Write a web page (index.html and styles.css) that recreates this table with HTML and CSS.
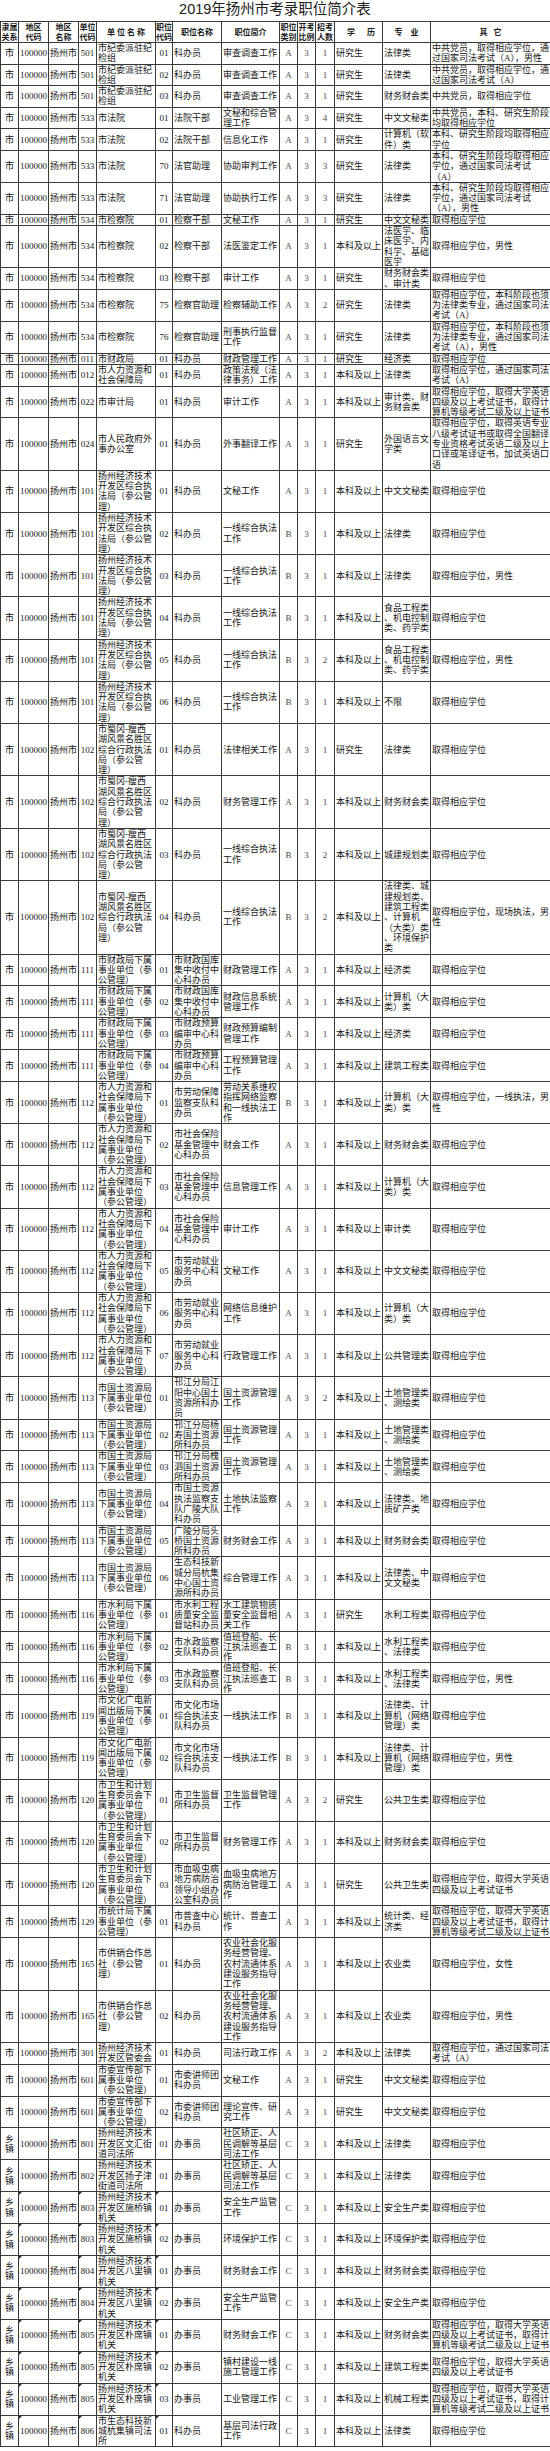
FILE: index.html
```html
<!DOCTYPE html>
<html lang="zh-CN">
<head>
<meta charset="utf-8">
<title>2019年扬州市考录职位简介表</title>
<link rel="stylesheet" href="styles.css">
</head>
<body>
<div class="title">2019年扬州市考录职位简介表</div>
<table class="jobs">
<colgroup>
<col class="w1"><col class="w2"><col class="w3"><col class="w4"><col class="w5"><col class="w6"><col class="w7"><col class="w8"><col class="w9"><col class="w10"><col class="w11"><col class="w12"><col class="w13"><col class="w14">
</colgroup>
<thead>
<tr><th>隶属<br>关系</th><th>地区<br>代码</th><th>地区<br>名称</th><th>单位<br>代码</th><th class="sp-a">单位名称</th><th>职位<br>代码</th><th>职位名称</th><th>职位简介</th><th>职位<br>类别</th><th>开考<br>比例</th><th>招考<br>人数</th><th class="sp-b">学历</th><th class="sp-c">专业</th><th class="sp-d">其它</th></tr>
</thead>
<tbody>
<tr><td>市</td><td>100000</td><td>扬州市</td><td>501</td><td>市纪委派驻纪<br>检组</td><td>01</td><td>科办员</td><td>审查调查工作</td><td>A</td><td>3</td><td>1</td><td>研究生</td><td>法律类</td><td>中共党员，取得相应学位，通<br>过国家司法考试（A），男性</td></tr>
<tr><td>市</td><td>100000</td><td>扬州市</td><td>501</td><td>市纪委派驻纪<br>检组</td><td>02</td><td>科办员</td><td>审查调查工作</td><td>A</td><td>3</td><td>1</td><td>研究生</td><td>法律类</td><td>中共党员，取得相应学位，通<br>过国家司法考试（A）</td></tr>
<tr><td>市</td><td>100000</td><td>扬州市</td><td>501</td><td>市纪委派驻纪<br>检组</td><td>03</td><td>科办员</td><td>审查调查工作</td><td>A</td><td>3</td><td>1</td><td>研究生</td><td>财务财会类</td><td>中共党员，取得相应学位</td></tr>
<tr><td>市</td><td>100000</td><td>扬州市</td><td>533</td><td>市法院</td><td>01</td><td>法院干部</td><td>文秘和综合管<br>理工作</td><td>A</td><td>3</td><td>4</td><td>研究生</td><td>中文文秘类</td><td>中共党员，本科、研究生阶段<br>均取得相应学位</td></tr>
<tr><td>市</td><td>100000</td><td>扬州市</td><td>533</td><td>市法院</td><td>02</td><td>法院干部</td><td>信息化工作</td><td>A</td><td>3</td><td>1</td><td>研究生</td><td>计算机（软<br>件）类</td><td>本科、研究生阶段均取得相应<br>学位</td></tr>
<tr><td>市</td><td>100000</td><td>扬州市</td><td>533</td><td>市法院</td><td>70</td><td>法官助理</td><td>协助审判工作</td><td>A</td><td>3</td><td>3</td><td>研究生</td><td>法律类</td><td>本科、研究生阶段均取得相应<br>学位，通过国家司法考试<br>（A）</td></tr>
<tr><td>市</td><td>100000</td><td>扬州市</td><td>533</td><td>市法院</td><td>71</td><td>法官助理</td><td>协助执行工作</td><td>A</td><td>3</td><td>3</td><td>研究生</td><td>法律类</td><td>本科、研究生阶段均取得相应<br>学位，通过国家司法考试<br>（A），男性</td></tr>
<tr><td>市</td><td>100000</td><td>扬州市</td><td>534</td><td>市检察院</td><td>01</td><td>检察干部</td><td>文秘工作</td><td>A</td><td>3</td><td>1</td><td>研究生</td><td>中文文秘类</td><td>取得相应学位</td></tr>
<tr><td>市</td><td>100000</td><td>扬州市</td><td>534</td><td>市检察院</td><td>02</td><td>检察干部</td><td>法医鉴定工作</td><td>A</td><td>3</td><td>1</td><td>本科及以上</td><td>法医学、临<br>床医学、内<br>科学、基础<br>医学</td><td>取得相应学位，男性</td></tr>
<tr><td>市</td><td>100000</td><td>扬州市</td><td>534</td><td>市检察院</td><td>03</td><td>检察干部</td><td>审计工作</td><td>A</td><td>3</td><td>1</td><td>研究生</td><td>财务财会类<br>、审计类</td><td>取得相应学位</td></tr>
<tr><td>市</td><td>100000</td><td>扬州市</td><td>534</td><td>市检察院</td><td>75</td><td>检察官助理</td><td>检察辅助工作</td><td>A</td><td>3</td><td>2</td><td>研究生</td><td>法律类</td><td>取得相应学位，本科阶段也须<br>为法律类专业，通过国家司法<br>考试（A）</td></tr>
<tr><td>市</td><td>100000</td><td>扬州市</td><td>534</td><td>市检察院</td><td>76</td><td>检察官助理</td><td>刑事执行监督<br>工作</td><td>A</td><td>3</td><td>1</td><td>研究生</td><td>法律类</td><td>取得相应学位，本科阶段也须<br>为法律类专业，通过国家司法<br>考试（A），男性</td></tr>
<tr><td>市</td><td>100000</td><td>扬州市</td><td>011</td><td>市财政局</td><td>01</td><td>科办员</td><td>财政管理工作</td><td>A</td><td>3</td><td>1</td><td>研究生</td><td>经济类</td><td>取得相应学位</td></tr>
<tr><td>市</td><td>100000</td><td>扬州市</td><td>012</td><td>市人力资源和<br>社会保障局</td><td>01</td><td>科办员</td><td>政策法规（法<br>律事务）工作</td><td>A</td><td>3</td><td>1</td><td>本科及以上</td><td>法律类</td><td>取得相应学位，通过国家司法<br>考试（A）</td></tr>
<tr><td>市</td><td>100000</td><td>扬州市</td><td>022</td><td>市审计局</td><td>01</td><td>科办员</td><td>审计工作</td><td>A</td><td>3</td><td>1</td><td>本科及以上</td><td>审计类、财<br>务财会类</td><td>取得相应学位，取得大学英语<br>四级及以上考试证书，取得计<br>算机等级考试二级及以上证书</td></tr>
<tr><td>市</td><td>100000</td><td>扬州市</td><td>024</td><td>市人民政府外<br>事办公室</td><td>01</td><td>科办员</td><td>外事翻译工作</td><td>A</td><td>3</td><td>1</td><td>研究生</td><td>外国语言文<br>学类</td><td>取得相应学位，取得英语专业<br>八级考试证书或取得全国翻译<br>专业资格考试英语二级及以上<br>口译或笔译证书，加试英语口<br>语</td></tr>
<tr><td>市</td><td>100000</td><td>扬州市</td><td>101</td><td>扬州经济技术<br>开发区综合执<br>法局（参公管<br>理）</td><td>01</td><td>科办员</td><td>文秘工作</td><td>A</td><td>3</td><td>1</td><td>本科及以上</td><td>中文文秘类</td><td>取得相应学位</td></tr>
<tr><td>市</td><td>100000</td><td>扬州市</td><td>101</td><td>扬州经济技术<br>开发区综合执<br>法局（参公管<br>理）</td><td>02</td><td>科办员</td><td>一线综合执法<br>工作</td><td>B</td><td>3</td><td>1</td><td>本科及以上</td><td>法律类</td><td>取得相应学位</td></tr>
<tr><td>市</td><td>100000</td><td>扬州市</td><td>101</td><td>扬州经济技术<br>开发区综合执<br>法局（参公管<br>理）</td><td>03</td><td>科办员</td><td>一线综合执法<br>工作</td><td>B</td><td>3</td><td>1</td><td>本科及以上</td><td>法律类</td><td>取得相应学位，男性</td></tr>
<tr><td>市</td><td>100000</td><td>扬州市</td><td>101</td><td>扬州经济技术<br>开发区综合执<br>法局（参公管<br>理）</td><td>04</td><td>科办员</td><td>一线综合执法<br>工作</td><td>B</td><td>3</td><td>1</td><td>本科及以上</td><td>食品工程类<br>、机电控制<br>类、药学类</td><td>取得相应学位</td></tr>
<tr><td>市</td><td>100000</td><td>扬州市</td><td>101</td><td>扬州经济技术<br>开发区综合执<br>法局（参公管<br>理）</td><td>05</td><td>科办员</td><td>一线综合执法<br>工作</td><td>B</td><td>3</td><td>2</td><td>本科及以上</td><td>食品工程类<br>、机电控制<br>类、药学类</td><td>取得相应学位，男性</td></tr>
<tr><td>市</td><td>100000</td><td>扬州市</td><td>101</td><td>扬州经济技术<br>开发区综合执<br>法局（参公管<br>理）</td><td>06</td><td>科办员</td><td>一线综合执法<br>工作</td><td>B</td><td>3</td><td>1</td><td>本科及以上</td><td>不限</td><td>取得相应学位</td></tr>
<tr><td>市</td><td>100000</td><td>扬州市</td><td>102</td><td>市蜀冈-瘦西<br>湖风景名胜区<br>综合行政执法<br>局（参公管<br>理）</td><td>01</td><td>科办员</td><td>法律相关工作</td><td>A</td><td>3</td><td>1</td><td>研究生</td><td>法律类</td><td>取得相应学位</td></tr>
<tr><td>市</td><td>100000</td><td>扬州市</td><td>102</td><td>市蜀冈-瘦西<br>湖风景名胜区<br>综合行政执法<br>局（参公管<br>理）</td><td>02</td><td>科办员</td><td>财务管理工作</td><td>A</td><td>3</td><td>1</td><td>本科及以上</td><td>财务财会类</td><td>取得相应学位</td></tr>
<tr><td>市</td><td>100000</td><td>扬州市</td><td>102</td><td>市蜀冈-瘦西<br>湖风景名胜区<br>综合行政执法<br>局（参公管<br>理）</td><td>03</td><td>科办员</td><td>一线综合执法<br>工作</td><td>B</td><td>3</td><td>2</td><td>本科及以上</td><td>城建规划类</td><td>取得相应学位</td></tr>
<tr><td>市</td><td>100000</td><td>扬州市</td><td>102</td><td>市蜀冈-瘦西<br>湖风景名胜区<br>综合行政执法<br>局（参公管<br>理）</td><td>04</td><td>科办员</td><td>一线综合执法<br>工作</td><td>B</td><td>3</td><td>2</td><td>本科及以上</td><td>法律类、城<br>建规划类、<br>建筑工程类<br>、计算机<br>（大类）类<br>、环境保护<br>类</td><td>取得相应学位，现场执法，男<br>性</td></tr>
<tr><td>市</td><td>100000</td><td>扬州市</td><td>111</td><td>市财政局下属<br>事业单位（参<br>公管理）</td><td>01</td><td>市财政国库<br>集中收付中<br>心科办员</td><td>财政管理工作</td><td>A</td><td>3</td><td>1</td><td>本科及以上</td><td>经济类</td><td>取得相应学位</td></tr>
<tr><td>市</td><td>100000</td><td>扬州市</td><td>111</td><td>市财政局下属<br>事业单位（参<br>公管理）</td><td>02</td><td>市财政国库<br>集中收付中<br>心科办员</td><td>财政信息系统<br>管理工作</td><td>A</td><td>3</td><td>1</td><td>本科及以上</td><td>计算机（大<br>类）类</td><td>取得相应学位</td></tr>
<tr><td>市</td><td>100000</td><td>扬州市</td><td>111</td><td>市财政局下属<br>事业单位（参<br>公管理）</td><td>03</td><td>市财政预算<br>编审中心科<br>办员</td><td>财政预算编制<br>管理工作</td><td>A</td><td>3</td><td>1</td><td>本科及以上</td><td>经济类</td><td>取得相应学位</td></tr>
<tr><td>市</td><td>100000</td><td>扬州市</td><td>111</td><td>市财政局下属<br>事业单位（参<br>公管理）</td><td>04</td><td>市财政预算<br>编审中心科<br>办员</td><td>工程预算管理<br>工作</td><td>A</td><td>3</td><td>1</td><td>本科及以上</td><td>建筑工程类</td><td>取得相应学位</td></tr>
<tr><td>市</td><td>100000</td><td>扬州市</td><td>112</td><td>市人力资源和<br>社会保障局下<br>属事业单位<br>（参公管理）</td><td>01</td><td>市劳动保障<br>监察支队科<br>办员</td><td>劳动关系维权<br>指挥网络监察<br>和一线执法工<br>作</td><td>B</td><td>3</td><td>1</td><td>本科及以上</td><td>计算机（大<br>类）类</td><td>取得相应学位，一线执法，男<br>性</td></tr>
<tr><td>市</td><td>100000</td><td>扬州市</td><td>112</td><td>市人力资源和<br>社会保障局下<br>属事业单位<br>（参公管理）</td><td>02</td><td>市社会保险<br>基金管理中<br>心科办员</td><td>财会工作</td><td>A</td><td>3</td><td>1</td><td>本科及以上</td><td>财务财会类</td><td>取得相应学位</td></tr>
<tr><td>市</td><td>100000</td><td>扬州市</td><td>112</td><td>市人力资源和<br>社会保障局下<br>属事业单位<br>（参公管理）</td><td>03</td><td>市社会保险<br>基金管理中<br>心科办员</td><td>信息管理工作</td><td>A</td><td>3</td><td>1</td><td>本科及以上</td><td>计算机（大<br>类）类</td><td>取得相应学位</td></tr>
<tr><td>市</td><td>100000</td><td>扬州市</td><td>112</td><td>市人力资源和<br>社会保障局下<br>属事业单位<br>（参公管理）</td><td>04</td><td>市社会保险<br>基金管理中<br>心科办员</td><td>审计工作</td><td>A</td><td>3</td><td>1</td><td>本科及以上</td><td>审计类</td><td>取得相应学位</td></tr>
<tr><td>市</td><td>100000</td><td>扬州市</td><td>112</td><td>市人力资源和<br>社会保障局下<br>属事业单位<br>（参公管理）</td><td>05</td><td>市劳动就业<br>服务中心科<br>办员</td><td>文秘工作</td><td>A</td><td>3</td><td>1</td><td>本科及以上</td><td>中文文秘类</td><td>取得相应学位</td></tr>
<tr><td>市</td><td>100000</td><td>扬州市</td><td>112</td><td>市人力资源和<br>社会保障局下<br>属事业单位<br>（参公管理）</td><td>06</td><td>市劳动就业<br>服务中心科<br>办员</td><td>网络信息维护<br>工作</td><td>A</td><td>3</td><td>1</td><td>本科及以上</td><td>计算机（大<br>类）类</td><td>取得相应学位</td></tr>
<tr><td>市</td><td>100000</td><td>扬州市</td><td>112</td><td>市人力资源和<br>社会保障局下<br>属事业单位<br>（参公管理）</td><td>07</td><td>市劳动就业<br>服务中心科<br>办员</td><td>行政管理工作</td><td>A</td><td>3</td><td>1</td><td>本科及以上</td><td>公共管理类</td><td>取得相应学位</td></tr>
<tr><td>市</td><td>100000</td><td>扬州市</td><td>113</td><td>市国土资源局<br>下属事业单位<br>（参公管理）</td><td>01</td><td>邗江分局江<br>阳中心国土<br>资源所科办<br>员</td><td>国土资源管理<br>工作</td><td>A</td><td>3</td><td>2</td><td>本科及以上</td><td>土地管理类<br>、测绘类</td><td>取得相应学位</td></tr>
<tr><td>市</td><td>100000</td><td>扬州市</td><td>113</td><td>市国土资源局<br>下属事业单位<br>（参公管理）</td><td>02</td><td>邗江分局杨<br>寿国土资源<br>所科办员</td><td>国土资源管理<br>工作</td><td>A</td><td>3</td><td>1</td><td>本科及以上</td><td>土地管理类<br>、测绘类</td><td>取得相应学位</td></tr>
<tr><td>市</td><td>100000</td><td>扬州市</td><td>113</td><td>市国土资源局<br>下属事业单位<br>（参公管理）</td><td>03</td><td>邗江分局槐<br>泗国土资源<br>所科办员</td><td>国土资源管理<br>工作</td><td>A</td><td>3</td><td>1</td><td>本科及以上</td><td>土地管理类<br>、测绘类</td><td>取得相应学位</td></tr>
<tr><td>市</td><td>100000</td><td>扬州市</td><td>113</td><td>市国土资源局<br>下属事业单位<br>（参公管理）</td><td>04</td><td>市国土资源<br>执法监察支<br>队广陵大队<br>科办员</td><td>土地执法监察<br>工作</td><td>A</td><td>3</td><td>1</td><td>本科及以上</td><td>法律类、地<br>质矿产类</td><td>取得相应学位</td></tr>
<tr><td>市</td><td>100000</td><td>扬州市</td><td>113</td><td>市国土资源局<br>下属事业单位<br>（参公管理）</td><td>05</td><td>广陵分局头<br>桥国土资源<br>所科办员</td><td>财务财会工作</td><td>A</td><td>3</td><td>1</td><td>本科及以上</td><td>财务财会类</td><td>取得相应学位</td></tr>
<tr><td>市</td><td>100000</td><td>扬州市</td><td>113</td><td>市国土资源局<br>下属事业单位<br>（参公管理）</td><td>06</td><td>生态科技新<br>城分局杭集<br>中心国土资<br>源所科办员</td><td>综合管理工作</td><td>A</td><td>3</td><td>1</td><td>本科及以上</td><td>法律类、中<br>文文秘类</td><td>取得相应学位</td></tr>
<tr><td>市</td><td>100000</td><td>扬州市</td><td>116</td><td>市水利局下属<br>事业单位（参<br>公管理）</td><td>01</td><td>市水利工程<br>质量安全监<br>督站科办员</td><td>水工建筑物质<br>量安全监督相<br>关工作</td><td>A</td><td>3</td><td>1</td><td>研究生</td><td>水利工程类</td><td>取得相应学位</td></tr>
<tr><td>市</td><td>100000</td><td>扬州市</td><td>116</td><td>市水利局下属<br>事业单位（参<br>公管理）</td><td>02</td><td>市水政监察<br>支队科办员</td><td>值班登船、长<br>江执法巡查工<br>作</td><td>B</td><td>3</td><td>1</td><td>本科及以上</td><td>水利工程类<br>、法律类</td><td>取得相应学位</td></tr>
<tr><td>市</td><td>100000</td><td>扬州市</td><td>116</td><td>市水利局下属<br>事业单位（参<br>公管理）</td><td>03</td><td>市水政监察<br>支队科办员</td><td>值班登船、长<br>江执法巡查工<br>作</td><td>B</td><td>3</td><td>1</td><td>本科及以上</td><td>水利工程类<br>、法律类</td><td>取得相应学位，男性</td></tr>
<tr><td>市</td><td>100000</td><td>扬州市</td><td>119</td><td>市文化广电新<br>闻出版局下属<br>事业单位（参<br>公管理）</td><td>01</td><td>市文化市场<br>综合执法支<br>队科办员</td><td>一线执法工作</td><td>B</td><td>3</td><td>1</td><td>本科及以上</td><td>法律类、计<br>算机（网络<br>管理）类</td><td>取得相应学位</td></tr>
<tr><td>市</td><td>100000</td><td>扬州市</td><td>119</td><td>市文化广电新<br>闻出版局下属<br>事业单位（参<br>公管理）</td><td>02</td><td>市文化市场<br>综合执法支<br>队科办员</td><td>一线执法工作</td><td>B</td><td>3</td><td>1</td><td>本科及以上</td><td>法律类、计<br>算机（网络<br>管理）类</td><td>取得相应学位，男性</td></tr>
<tr><td>市</td><td>100000</td><td>扬州市</td><td>120</td><td>市卫生和计划<br>生育委员会下<br>属事业单位<br>（参公管理）</td><td>01</td><td>市卫生监督<br>所科办员</td><td>卫生监督管理<br>工作</td><td>A</td><td>3</td><td>2</td><td>研究生</td><td>公共卫生类</td><td>取得相应学位</td></tr>
<tr><td>市</td><td>100000</td><td>扬州市</td><td>120</td><td>市卫生和计划<br>生育委员会下<br>属事业单位<br>（参公管理）</td><td>02</td><td>市卫生监督<br>所科办员</td><td>财务管理工作</td><td>A</td><td>3</td><td>1</td><td>本科及以上</td><td>财务财会类</td><td>取得相应学位</td></tr>
<tr><td>市</td><td>100000</td><td>扬州市</td><td>120</td><td>市卫生和计划<br>生育委员会下<br>属事业单位<br>（参公管理）</td><td>03</td><td>市血吸虫病<br>地方病防治<br>领导小组办<br>公室科办员</td><td>血吸虫病地方<br>病防治管理工<br>作</td><td>A</td><td>3</td><td>1</td><td>研究生</td><td>公共卫生类</td><td>取得相应学位，取得大学英语<br>四级及以上考试证书</td></tr>
<tr><td>市</td><td>100000</td><td>扬州市</td><td>129</td><td>市统计局下属<br>事业单位（参<br>公管理）</td><td>01</td><td>市普查中心<br>科办员</td><td>统计、普查工<br>作</td><td>A</td><td>3</td><td>1</td><td>本科及以上</td><td>统计类、经<br>济类</td><td>取得相应学位，取得大学英语<br>四级及以上考试证书，取得计<br>算机等级考试二级及以上证书</td></tr>
<tr><td>市</td><td>100000</td><td>扬州市</td><td>165</td><td>市供销合作总<br>社（参公管<br>理）</td><td>01</td><td>科办员</td><td>农业社会化服<br>务经营管理、<br>农村流通体系<br>建设服务指导<br>工作</td><td>A</td><td>3</td><td>1</td><td>本科及以上</td><td>农业类</td><td>取得相应学位，女性</td></tr>
<tr><td>市</td><td>100000</td><td>扬州市</td><td>165</td><td>市供销合作总<br>社（参公管<br>理）</td><td>02</td><td>科办员</td><td>农业社会化服<br>务经营管理、<br>农村流通体系<br>建设服务指导<br>工作</td><td>A</td><td>3</td><td>1</td><td>本科及以上</td><td>农业类</td><td>取得相应学位，男性</td></tr>
<tr><td>市</td><td>100000</td><td>扬州市</td><td>301</td><td>扬州经济技术<br>开发区管委会</td><td>01</td><td>科办员</td><td>司法行政工作</td><td>A</td><td>3</td><td>2</td><td>本科及以上</td><td>法律类</td><td>取得相应学位，通过国家司法<br>考试（A）</td></tr>
<tr><td>市</td><td>100000</td><td>扬州市</td><td>601</td><td>市委宣传部下<br>属事业单位<br>（参公管理）</td><td>01</td><td>市委讲师团<br>科办员</td><td>文秘工作</td><td>A</td><td>3</td><td>1</td><td>研究生</td><td>中文文秘类</td><td>取得相应学位</td></tr>
<tr><td>市</td><td>100000</td><td>扬州市</td><td>601</td><td>市委宣传部下<br>属事业单位<br>（参公管理）</td><td>02</td><td>市委讲师团<br>科办员</td><td>理论宣传、研<br>究工作</td><td>A</td><td>3</td><td>1</td><td>研究生</td><td>中文文秘类</td><td>取得相应学位</td></tr>
<tr><td>乡<br>镇</td><td>100000</td><td>扬州市</td><td>801</td><td>扬州经济技术<br>开发区文汇街<br>道司法所</td><td>01</td><td>办事员</td><td>社区矫正、人<br>民调解等基层<br>司法工作</td><td>C</td><td>3</td><td>1</td><td>本科及以上</td><td>法律类</td><td>取得相应学位</td></tr>
<tr><td>乡<br>镇</td><td>100000</td><td>扬州市</td><td>802</td><td>扬州经济技术<br>开发区扬子津<br>街道司法所</td><td>01</td><td>办事员</td><td>社区矫正、人<br>民调解等基层<br>司法工作</td><td>C</td><td>3</td><td>1</td><td>本科及以上</td><td>法律类</td><td>取得相应学位</td></tr>
<tr><td>乡<br>镇</td><td class="m">100000</td><td>扬州市</td><td class="m">803</td><td>扬州经济技术<br>开发区施桥镇<br>机关</td><td class="m">01</td><td>办事员</td><td>安全生产监管<br>工作</td><td>C</td><td>3</td><td>1</td><td>本科及以上</td><td>安全生产类</td><td>取得相应学位</td></tr>
<tr><td>乡<br>镇</td><td class="m">100000</td><td>扬州市</td><td class="m">803</td><td>扬州经济技术<br>开发区施桥镇<br>机关</td><td class="m">02</td><td>办事员</td><td>环境保护工作</td><td>C</td><td>3</td><td>1</td><td>本科及以上</td><td>环境保护类</td><td>取得相应学位</td></tr>
<tr><td>乡<br>镇</td><td class="m">100000</td><td>扬州市</td><td class="m">804</td><td>扬州经济技术<br>开发区八里镇<br>机关</td><td class="m">01</td><td>办事员</td><td>财务财会工作</td><td>C</td><td>3</td><td>1</td><td>本科及以上</td><td>财务财会类</td><td>取得相应学位</td></tr>
<tr><td>乡<br>镇</td><td class="m">100000</td><td>扬州市</td><td class="m">804</td><td>扬州经济技术<br>开发区八里镇<br>机关</td><td class="m">02</td><td>办事员</td><td>安全生产监管<br>工作</td><td>C</td><td>3</td><td>1</td><td>本科及以上</td><td>安全生产类</td><td>取得相应学位</td></tr>
<tr><td>乡<br>镇</td><td class="m">100000</td><td>扬州市</td><td class="m">805</td><td>扬州经济技术<br>开发区朴席镇<br>机关</td><td class="m">01</td><td>办事员</td><td>财务财会工作</td><td>C</td><td>3</td><td>1</td><td>本科及以上</td><td>财务财会类</td><td>取得相应学位，取得大学英语<br>四级及以上考试证书，取得计<br>算机等级考试二级及以上证书</td></tr>
<tr><td>乡<br>镇</td><td class="m">100000</td><td>扬州市</td><td class="m">805</td><td>扬州经济技术<br>开发区朴席镇<br>机关</td><td class="m">02</td><td>办事员</td><td>镇村建设一线<br>施工管理工作</td><td>C</td><td>3</td><td>1</td><td>本科及以上</td><td>建筑工程类</td><td>取得相应学位，取得大学英语<br>四级及以上考试证书</td></tr>
<tr><td>乡<br>镇</td><td class="m">100000</td><td>扬州市</td><td class="m">805</td><td>扬州经济技术<br>开发区朴席镇<br>机关</td><td class="m">03</td><td>办事员</td><td>工业管理工作</td><td>C</td><td>3</td><td>1</td><td>本科及以上</td><td>机械工程类</td><td>取得相应学位，取得大学英语<br>四级及以上考试证书，取得计<br>算机等级考试二级及以上证书</td></tr>
<tr><td>乡<br>镇</td><td class="m">100000</td><td>扬州市</td><td class="m">806</td><td>市生态科技新<br>城杭集镇司法<br>所</td><td class="m">01</td><td>科办员</td><td>基层司法行政<br>工作</td><td>C</td><td>3</td><td>1</td><td>本科及以上</td><td>法律类</td><td>取得相应学位</td></tr>
</tbody>
</table>
</body>
</html>
```

FILE: styles.css
```css
html, body {
  margin: 0;
  padding: 0;
  background: #ffffff;
}

body {
  width: 550px;
  font-family: "Liberation Serif", "Noto Sans CJK SC", serif;
  color: #161616;
}

.title {
  height: 21px;
  line-height: 19px;
  text-align: center;
  font-family: "Liberation Sans", "Noto Sans CJK SC", sans-serif;
  font-size: 14.5px;
  color: #202020;
  white-space: nowrap;
}

.jobs {
  width: 550px;
  table-layout: fixed;
  border-collapse: collapse;
  font-size: 9px;
  line-height: 10.3px;
}

.w1 { width: 18px; }
.w2 { width: 30px; }
.w3 { width: 30px; }
.w4 { width: 18px; }
.w5 { width: 59px; }
.w6 { width: 17px; }
.w7 { width: 49px; }
.w8 { width: 58px; }
.w9 { width: 18px; }
.w10 { width: 18px; }
.w11 { width: 19px; }
.w12 { width: 48px; }
.w13 { width: 48px; }
.w14 { width: 120px; }

.jobs th,
.jobs td {
  border: 1px solid #3a3a3a;
  padding: 0 0 0 1px;
  white-space: nowrap;
  vertical-align: middle;
  text-align: left;
}

.jobs th {
  font-family: "Noto Sans CJK SC", sans-serif;
  font-weight: 700;
  font-size: 8px;
  line-height: 10px;
  text-align: center;
  padding: 0;
  color: #1a1a1a;
}

.jobs th.sp-a { letter-spacing: 2px; text-indent: 2px; }
.jobs th.sp-b { letter-spacing: 12px; text-indent: 12px; }
.jobs th.sp-c { letter-spacing: 8px; text-indent: 8px; }
.jobs th.sp-d { letter-spacing: 6px; text-indent: 6px; }

.jobs td:nth-child(1),
.jobs td:nth-child(4),
.jobs td:nth-child(6),
.jobs td:nth-child(9),
.jobs td:nth-child(10),
.jobs td:nth-child(11) {
  text-align: center;
  padding: 0;
}

.jobs td:nth-child(9),
.jobs td:nth-child(10),
.jobs td:nth-child(11) {
  color: #4a4a4a;
}

.jobs td.m {
  position: relative;
}

.jobs td.m::before {
  content: "";
  position: absolute;
  left: 0;
  top: 0;
  border-top: 3px solid #2a2a2a;
  border-right: 3px solid transparent;
}
```
